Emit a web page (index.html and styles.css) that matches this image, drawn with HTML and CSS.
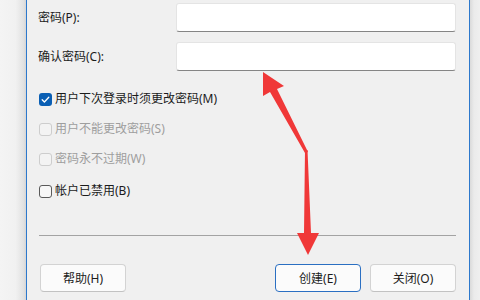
FILE: index.html
```html
<!DOCTYPE html>
<html lang="zh-CN">
<head>
<meta charset="utf-8">
<link rel="stylesheet" href="styles.css">
</head>
<body>
<div class="screen">
  <div class="backdrop-left"></div>
  <div class="dialog">
    <div class="fields">
      <div class="field">
        <label class="field-label">密码(P):</label>
        <div class="input"></div>
      </div>
      <div class="field">
        <label class="field-label">确认密码(C):</label>
        <div class="input"></div>
      </div>
    </div>
    <div class="checks">
      <div class="check">
        <span class="box checked"><svg viewBox="0 0 13 13" width="13" height="13"><path d="M3.2 6.8 L5.4 9 L9.8 4.2" fill="none" stroke="#fff" stroke-width="1.3" stroke-linecap="round" stroke-linejoin="round"/></svg></span>
        <span class="check-text">用户下次登录时须更改密码(M)</span>
      </div>
      <div class="check disabled">
        <span class="box"></span>
        <span class="check-text">用户不能更改密码(S)</span>
      </div>
      <div class="check disabled">
        <span class="box"></span>
        <span class="check-text">密码永不过期(W)</span>
      </div>
      <div class="check">
        <span class="box"></span>
        <span class="check-text">帐户已禁用(B)</span>
      </div>
    </div>
    <div class="separator"></div>
    <div class="buttons">
      <button class="btn">帮助(H)</button>
      <div class="spacer"></div>
      <button class="btn primary">创建(E)</button>
      <button class="btn">关闭(O)</button>
    </div>
  </div>
  <div class="backdrop-right"></div>
  <svg class="arrows" viewBox="0 0 480 300" width="480" height="300">
    <polygon points="263,72 284,86 277,89 308,152 305,153 270,92 263,96" fill="#f03838"/>
    <polygon points="305,150 307.5,150 311,233 319,233 308,255 297,233 304,233" fill="#f03838"/>
  </svg>
</div>
</body>
</html>
```
FILE: styles.css
```css
* { box-sizing: border-box; }
html, body { margin: 0; padding: 0; }
body {
  width: 480px;
  height: 300px;
  overflow: hidden;
  font-family: "Noto Sans", "Noto Sans CJK SC", sans-serif;
  font-size: 12px;
  color: #1b1b1b;
  background: #f0f0f0;
}
.screen {
  position: relative;
  display: flex;
  width: 480px;
  height: 300px;
}
.backdrop-left {
  width: 26px;
  flex: none;
  background: linear-gradient(to right, #f4f4f4 0%, #f1f1f1 60%, #e2e2e2 90%, #d6d6d6 100%);
}
.backdrop-right {
  flex: 1;
  background: linear-gradient(to right, #dadada 0%, #ebebeb 40%, #efefef 100%);
}
.dialog {
  width: 444px;
  flex: none;
  background: #f0f0f0;
  border-left: 1px solid #2c78cc;
  border-right: 1px solid #2c78cc;
  padding: 3px 13px 0 11px;
  display: flex;
  flex-direction: column;
}
.fields {
  display: flex;
  flex-direction: column;
  gap: 10px;
}
.field {
  display: flex;
  align-items: center;
  height: 29px;
}
.field-label {
  width: 138px;
  flex: none;
  line-height: 16px;
}
.input {
  flex: 1;
  height: 29px;
  background: #ffffff;
  border: 1px solid #e4e4e4;
  border-bottom: 1px solid #858585;
  border-radius: 3px;
}
.checks {
  margin-top: 13px;
  padding-left: 1px;
  display: flex;
  flex-direction: column;
}
.check {
  height: 30px;
  display: flex;
  align-items: center;
  gap: 3px;
}
.check:last-child { height: 32px; padding-top: 2px; }
.box {
  width: 13px;
  height: 13px;
  flex: none;
  border: 1px solid #5a5a5a;
  border-radius: 3px;
  background: #f7f7f7;
  display: flex;
}
.box.checked {
  border: none;
  background: #0a5fb4;
}
.check-text { line-height: 16px; }
.check.disabled { color: #9e9e9e; }
.check.disabled .box {
  border-color: #cdcdcd;
  background: #f3f3f3;
}
.separator {
  margin-top: 29px;
  margin-left: 1px;
  height: 1px;
  background: #a3a3a3;
}
.buttons {
  margin-top: 28px;
  margin-left: 2px;
  display: flex;
  gap: 9px;
}
.spacer { flex: 1; }
.btn {
  width: 86px;
  height: 28px;
  font-family: inherit;
  font-size: 12px;
  color: #1b1b1b;
  background: #fbfbfb;
  border: 1px solid #d3d3d3;
  border-bottom-color: #c2c2c2;
  border-radius: 4px;
  padding: 0;
}
.btn.primary {
  border: 1px solid #2a6fc2;
}
.arrows {
  position: absolute;
  left: 0;
  top: 0;
  pointer-events: none;
}
```
